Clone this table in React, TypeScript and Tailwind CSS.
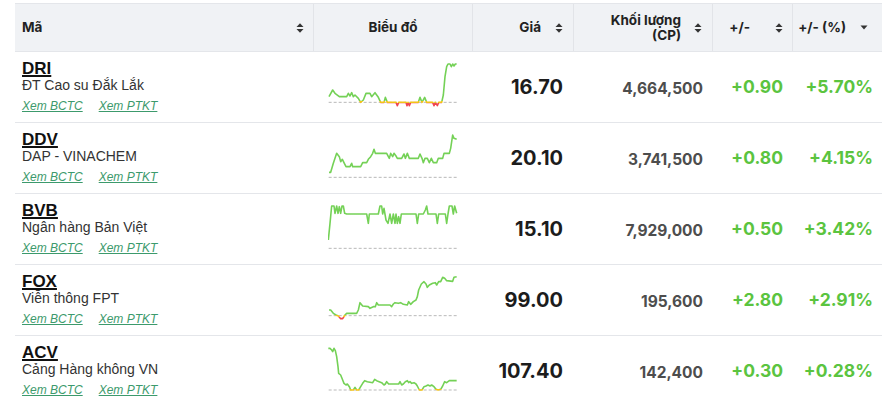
import React from "react";

type Stock = {
  code: string;
  name: string;
  price: string;
  volume: string;
  change: string;
  pct: string;
  base: number;
  y0: number;
  pts: number[][];
};

// chart points are in a 390-wide local space (x 54..444), scaled down 3x
const stocks: Stock[] = [
  {
    code: "DRI",
    name: "ĐT Cao su Đắk Lắk",
    price: "16.70",
    volume: "4,664,500",
    change: "+0.90",
    pct: "+5.70%",
    base: 157,
    y0: 21,
    pts: [
      [57, 140], [68, 120], [75, 130], [88, 140], [110, 140], [115, 130], [120, 138], [125, 128], [130, 140], [135, 135],
      [145, 145], [152, 157], [160, 150], [168, 130], [180, 130], [185, 140], [195, 128], [205, 142], [212, 157], [222, 157],
      [226, 142], [232, 157], [258, 157], [262, 167], [266, 157], [288, 157], [291, 167], [294, 157], [298, 167], [302, 157],
      [325, 157], [330, 142], [336, 157], [344, 142], [350, 157], [368, 157], [372, 167], [376, 157], [382, 167], [386, 157],
      [395, 157], [400, 135], [405, 80], [410, 50], [414, 42], [420, 42], [424, 50], [428, 42], [432, 48], [436, 42], [440, 42],
    ],
  },
  {
    code: "DDV",
    name: "DAP - VINACHEM",
    price: "20.10",
    volume: "3,741,500",
    change: "+0.80",
    pct: "+4.15%",
    base: 172,
    y0: 24,
    pts: [
      [57, 157], [62, 157], [70, 130], [80, 100], [88, 110], [92, 125], [97, 118], [103, 130], [108, 140], [120, 140],
      [125, 130], [128, 140], [152, 140], [158, 128], [170, 128], [175, 118], [182, 110], [188, 100], [192, 88], [196, 100],
      [230, 100], [238, 115], [242, 100], [248, 110], [252, 100], [258, 108], [262, 115], [275, 115], [282, 102], [286, 115],
      [292, 100], [298, 115], [325, 115], [330, 102], [336, 115], [340, 128], [345, 115], [352, 115], [358, 128], [364, 115],
      [370, 128], [380, 128], [385, 115], [398, 115], [402, 100], [418, 100], [422, 85], [428, 45], [432, 55], [440, 58],
    ],
  },
  {
    code: "BVB",
    name: "Ngân hàng Bản Việt",
    price: "15.10",
    volume: "7,929,000",
    change: "+0.50",
    pct: "+3.42%",
    base: 175,
    y0: 27,
    pts: [
      [55, 150], [60, 100], [65, 48], [72, 48], [75, 70], [80, 48], [84, 70], [88, 50], [92, 70], [96, 48], [100, 48],
      [104, 70], [110, 72], [170, 72], [175, 100], [178, 72], [205, 72], [210, 48], [215, 48], [218, 72], [222, 55],
      [228, 90], [234, 100], [240, 72], [245, 100], [250, 72], [255, 100], [258, 72], [262, 100], [266, 80], [270, 100],
      [274, 72], [318, 72], [322, 100], [326, 72], [340, 72], [346, 60], [350, 48], [354, 72], [378, 72], [382, 100],
      [386, 72], [406, 72], [410, 100], [414, 72], [418, 48], [426, 48], [430, 72], [434, 48], [440, 70],
    ],
  },
  {
    code: "FOX",
    name: "Viễn thông FPT",
    price: "99.00",
    volume: "195,600",
    change: "+2.80",
    pct: "+2.91%",
    base: 167,
    y0: 30,
    pts: [
      [57, 150], [62, 150], [70, 160], [78, 165], [85, 168], [92, 176], [98, 176], [105, 165], [110, 160], [140, 160],
      [145, 150], [150, 128], [158, 138], [175, 140], [180, 145], [190, 140], [196, 140], [200, 128], [205, 135], [240, 135],
      [245, 140], [250, 132], [255, 128], [265, 130], [272, 128], [280, 133], [292, 135], [296, 125], [302, 133], [310, 125],
      [318, 120], [322, 110], [326, 90], [334, 72], [342, 65], [348, 72], [352, 82], [358, 75], [368, 70], [376, 68],
      [380, 75], [386, 65], [392, 65], [398, 52], [404, 55], [410, 62], [428, 64], [432, 52], [440, 50],
    ],
  },
  {
    code: "ACV",
    name: "Cảng Hàng không VN",
    price: "107.40",
    volume: "142,400",
    change: "+0.30",
    pct: "+0.28%",
    base: 180,
    y0: 33,
    pts: [
      [55, 55], [60, 55], [65, 60], [68, 65], [72, 55], [76, 62], [80, 80], [84, 110], [86, 130], [92, 135], [98, 150],
      [102, 160], [108, 165], [112, 162], [118, 170], [122, 180], [130, 180], [135, 172], [140, 180], [146, 180], [152, 170],
      [158, 160], [164, 152], [172, 155], [188, 158], [194, 148], [200, 152], [215, 158], [222, 165], [226, 162], [230, 155],
      [236, 162], [266, 162], [270, 155], [275, 165], [280, 162], [286, 155], [292, 152], [296, 158], [300, 155], [305, 160],
      [312, 158], [318, 162], [322, 168], [328, 180], [336, 180], [342, 170], [348, 168], [354, 165], [360, 168], [365, 165],
      [372, 170], [378, 178], [384, 180], [392, 178], [398, 168], [404, 155], [410, 158], [418, 152], [440, 152],
    ],
  },
];

function SortIcon() {
  return (
    <svg width="8" height="12" viewBox="0 0 8 12" className="shrink-0">
      <path d="M0.5 5 L4 1.2 L7.5 5 Z" fill="#333" />
      <path d="M0.5 7 L7.5 7 L4 10.8 Z" fill="#333" />
    </svg>
  );
}

function CaretDown() {
  return (
    <svg width="8" height="5" viewBox="0 0 8 5" className="shrink-0">
      <path d="M0.5 0.5 L7.5 0.5 L4 4.5 Z" fill="#333" />
    </svg>
  );
}

function Spark({ s, i }: { s: Stock; i: number }) {
  const id = `sg${i}`;
  return (
    <svg width="130" height="50" viewBox={`54 ${s.y0} 390 150`}>
      <defs>
        <linearGradient id={id} gradientUnits="userSpaceOnUse" x1="0" y1={s.base - 6} x2="0" y2={s.base + 6}>
          <stop offset="0.25" stopColor="#74d156" />
          <stop offset="0.25" stopColor="#f3c316" />
          <stop offset="0.75" stopColor="#f3c316" />
          <stop offset="0.75" stopColor="#f0454f" />
        </linearGradient>
      </defs>
      <line
        x1="56"
        x2="442"
        y1={s.base}
        y2={s.base}
        stroke="#b9b9b9"
        strokeWidth="1"
        strokeDasharray="3 2"
        vectorEffect="non-scaling-stroke"
      />
      <polyline
        points={s.pts.map((p) => p.join(",")).join(" ")}
        fill="none"
        stroke={`url(#${id})`}
        strokeWidth="1.6"
        strokeLinejoin="round"
        vectorEffect="non-scaling-stroke"
      />
    </svg>
  );
}

const cols = "grid grid-cols-[298px_159px_101px_139px_80px_90px]";
const num = "font-['Inter',sans-serif]";

export default function App() {
  return (
    <div className="w-[895px] h-[406px] overflow-hidden bg-white pl-[15px] pt-[3px] font-['Liberation_Sans',Arial,sans-serif]">
      <div className="w-[867px]">
        <div className={`${cols} h-[48px] bg-[#f0f2f5] border-t border-[#e4e6ea] font-['Inter',sans-serif] text-[13.5px] font-bold text-[#222]`}>
          <div className="flex items-center justify-between pl-[7px] pr-[9px]">
            <span>Mã</span>
            <SortIcon />
          </div>
          <div className="flex items-center justify-center border-l border-[#e2e4e8]">Biểu đồ</div>
          <div className="flex items-center justify-end gap-[14px] border-l border-[#e2e4e8] pr-[10px]">
            <span>Giá</span>
            <SortIcon />
          </div>
          <div className="flex items-center justify-end gap-[13px] border-l border-[#e2e4e8] pr-[10px]">
            <span className="text-right leading-[15px]">
              Khối lượng
              <br />
              (CP)
            </span>
            <SortIcon />
          </div>
          <div className="flex items-center justify-end gap-[25px] border-l border-[#e2e4e8] pr-[9px]">
            <span>+/-</span>
            <SortIcon />
          </div>
          <div className="flex items-center justify-end gap-[14px] border-l border-[#e2e4e8] pr-[14px]">
            <span>+/- (%)</span>
            <CaretDown />
          </div>
        </div>

        {stocks.map((s, i) => (
          <div key={s.code} className={`${cols} h-[71px] border-t border-[#e4e6ea]`}>
            <div className="flex flex-col pl-[7px] pt-[7px]">
              <span className="text-[17px] leading-[19px] font-bold text-[#111] underline decoration-2 underline-offset-[1px] w-fit">
                {s.code}
              </span>
              <span className="text-[14px] leading-[14px] text-[#333]">{s.name}</span>
              <div className="mt-[6px] flex gap-[16px] text-[12px] leading-[16px] italic text-[#3c9a6c]">
                <span className="underline">Xem BCTC</span>
                <span className="underline">Xem PTKT</span>
              </div>
            </div>
            <div className="flex justify-center pt-[5px]">
              <Spark s={s} i={i} />
            </div>
            <div className={`${num} flex items-center justify-end pr-[10px] text-[20px] font-bold text-[#1c1c1c]`}>
              {s.price}
            </div>
            <div className={`${num} flex items-center justify-end pr-[9px] pt-[3px] text-[15.5px] font-bold text-[#4d4d4d]`}>
              {s.volume}
            </div>
            <div className={`${num} flex items-center justify-end pr-[9px] text-[17.5px] font-bold text-[#5bc43f]`}>
              {s.change}
            </div>
            <div className={`${num} flex items-center justify-end pr-[9px] text-[17.5px] font-bold text-[#5bc43f]`}>
              {s.pct}
            </div>
          </div>
        ))}
      </div>
    </div>
  );
}
